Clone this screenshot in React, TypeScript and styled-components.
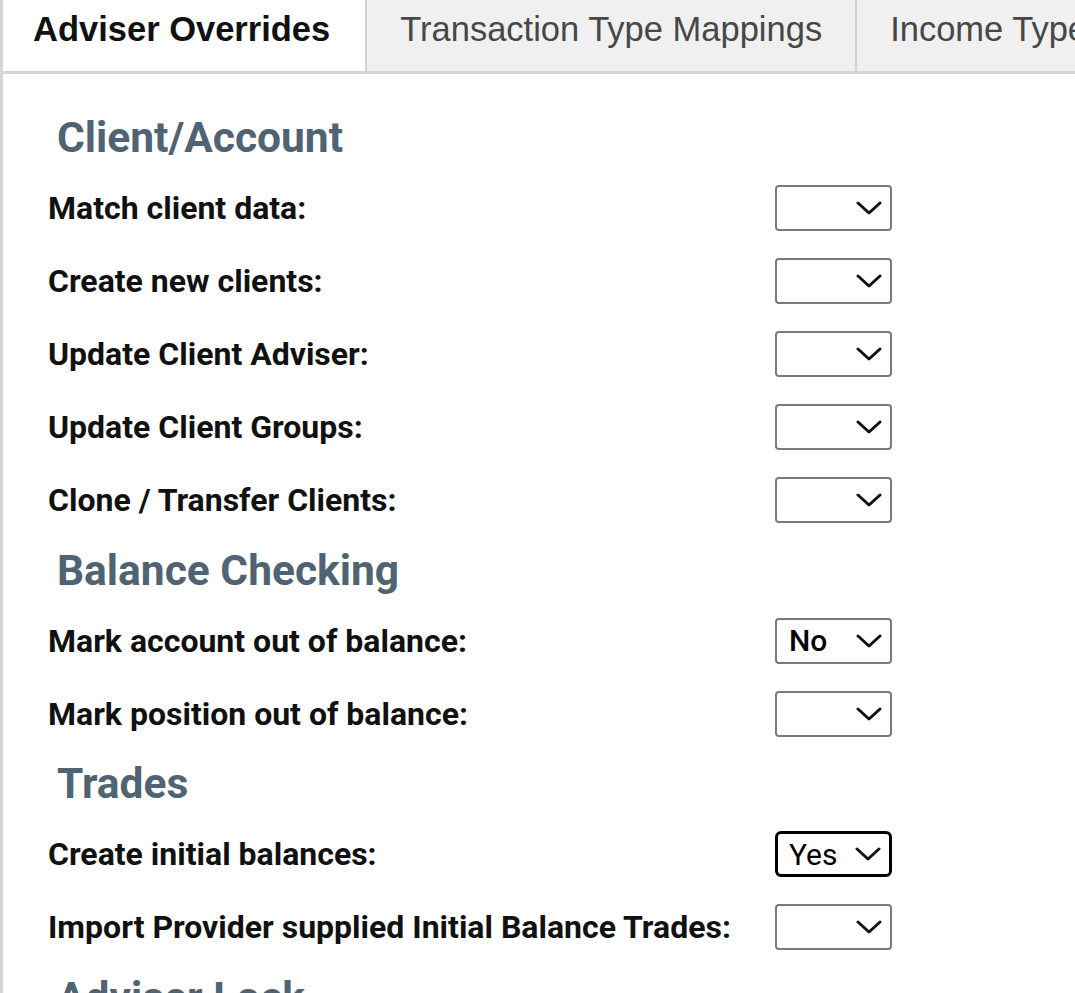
import React from "react";
import styled, { createGlobalStyle } from "styled-components";

const GlobalStyle = createGlobalStyle`
  html, body {
    margin: 0;
    padding: 0;
    background: #ffffff;
  }
  body {
    font-family: Roboto, "Liberation Sans", Arial, sans-serif;
    overflow: hidden;
  }
`;

type Field = { label: string; value?: string; focused?: boolean };
type Section = { title: string; fields: Field[] };

const sections: Section[] = [
  {
    title: "Client/Account",
    fields: [
      { label: "Match client data:" },
      { label: "Create new clients:" },
      { label: "Update Client Adviser:" },
      { label: "Update Client Groups:" },
      { label: "Clone / Transfer Clients:" },
    ],
  },
  {
    title: "Balance Checking",
    fields: [
      { label: "Mark account out of balance:", value: "No" },
      { label: "Mark position out of balance:" },
    ],
  },
  {
    title: "Trades",
    fields: [
      { label: "Create initial balances:", value: "Yes", focused: true },
      { label: "Import Provider supplied Initial Balance Trades:" },
    ],
  },
  { title: "Adviser Lock", fields: [] },
];

const tabs = ["Adviser Overrides", "Transaction Type Mappings", "Income Type Mappings"];

const Chevron = () => (
  <ChevronSvg viewBox="0 0 26 14">
    <polyline points="2,2 13,12 24,2" />
  </ChevronSvg>
);

const Dropdown = ({ value, focused }: { value?: string; focused?: boolean }) => (
  <SelectBox $focused={focused}>
    <SelectValue $strong={value === "No"}>{value ?? ""}</SelectValue>
    <Chevron />
  </SelectBox>
);

export default function App() {
  return (
    <>
      <GlobalStyle />
      <Page>
        <TabBar>
          {tabs.map((t, i) => (
            <Tab key={t} $active={i === 0}>
              {t}
            </Tab>
          ))}
        </TabBar>
        <Content>
          {sections.map((s) => (
            <React.Fragment key={s.title}>
              <Heading>{s.title}</Heading>
              {s.fields.map((f) => (
                <Row key={f.label}>
                  <Label>{f.label}</Label>
                  <Dropdown value={f.value} focused={f.focused} />
                </Row>
              ))}
            </React.Fragment>
          ))}
        </Content>
      </Page>
    </>
  );
}

const Page = styled.div`
  width: 1075px;
  height: 993px;
  border-left: 3px solid #d6d6d6;
  box-sizing: border-box;
  overflow: hidden;
  background: #ffffff;
`;

const TabBar = styled.div`
  display: flex;
  height: 74px;
  border-bottom: 3px solid #d6d6d6;
  box-sizing: border-box;
  white-space: nowrap;
  overflow: hidden;
`;

const Tab = styled.div<{ $active?: boolean }>`
  flex: none;
  display: flex;
  align-items: center;
  padding: 0 35px 12px 30px;
  font-family: "Liberation Sans", Arial, sans-serif;
  font-size: 34.5px;
  font-weight: ${(p) => (p.$active ? 700 : 400)};
  color: ${(p) => (p.$active ? "#111111" : "#474747")};
  background: ${(p) => (p.$active ? "#ffffff" : "#f0f0f0")};
  & + & {
    border-left: 2px solid #d2d2d2;
    padding-left: 33px;
    padding-right: 33px;
  }
`;

const Content = styled.div`
  padding: 30px 0 0 45px;
`;

const Heading = styled.div`
  height: 67.5px;
  line-height: 67.5px;
  margin-left: 9px;
  font-size: 42.5px;
  font-weight: 700;
  color: #4f6373;
`;

const Row = styled.div`
  display: grid;
  grid-template-columns: 727px 116px;
  align-items: center;
  height: 73px;
`;

const Label = styled.div`
  font-size: 32px;
  font-weight: 700;
  color: #111111;
  white-space: nowrap;
`;

const SelectBox = styled.div<{ $focused?: boolean }>`
  display: flex;
  align-items: center;
  justify-content: space-between;
  box-sizing: border-box;
  width: 117px;
  height: 46px;
  padding: 0 8px 0 ${(p) => (p.$focused ? 11 : 12)}px;
  border: ${(p) => (p.$focused ? "3px solid #000000" : "2px solid #7a7a7a")};
  border-radius: ${(p) => (p.$focused ? 6 : 4)}px;
  background: #ffffff;
`;

const SelectValue = styled.span<{ $strong?: boolean }>`
  font-family: Roboto, "Liberation Sans", Arial, sans-serif;
  font-size: 30px;
  font-weight: ${(p) => (p.$strong ? 500 : 400)};
  color: #000000;
`;

const ChevronSvg = styled.svg`
  width: 26px;
  height: 14px;
  fill: none;
  stroke: #111111;
  stroke-width: 3;
  stroke-linecap: round;
  stroke-linejoin: round;
`;
